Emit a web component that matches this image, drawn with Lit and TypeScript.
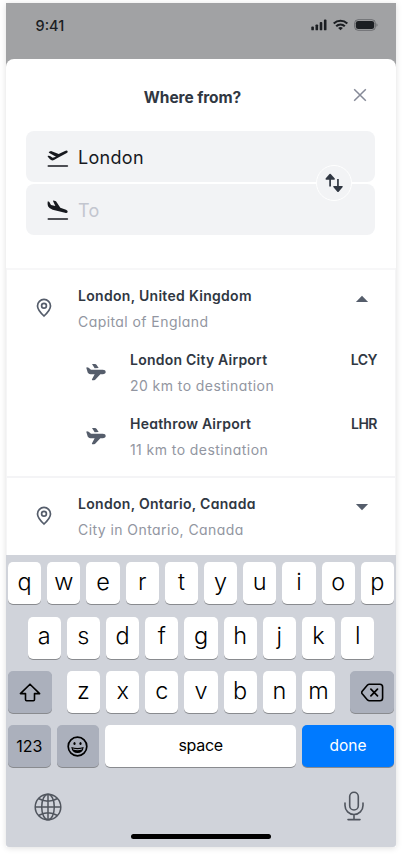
import { LitElement, html, css, svg } from "lit";
import { customElement, property } from "lit/decorators.js";

const icons: Record<string, unknown> = {
  signal: svg`<svg width="17" height="12" viewBox="0 0 17 12"><g fill="currentColor"><rect x="0.3" y="7.6" width="2.6" height="3.7" rx=".9"/><rect x="4.5" y="5.4" width="2.6" height="5.9" rx=".9"/><rect x="8.7" y="3" width="2.6" height="8.3" rx=".9"/><rect x="12.9" y="0.6" width="2.6" height="10.7" rx=".9"/></g></svg>`,
  wifi: svg`<svg width="16" height="12" viewBox="0 0 16 12"><g fill="none" stroke="currentColor" stroke-width="2.1"><path d="M.7 4.500a9.800 9.800 0 0 1 13.600 0"/><path d="M3.200 7.300a6 6 0 0 1 8.600 0"/></g><path d="M7.500 11.300 5.100 9.100a3.400 3.400 0 0 1 4.800 0z" fill="currentColor"/></svg>`,
  battery: svg`<svg width="24" height="12" viewBox="0 0 24 12"><rect x=".6" y=".7" width="20.8" height="10.6" rx="3.6" fill="none" stroke="currentColor" stroke-opacity=".4"/><rect x="1.8" y="1.9" width="18.4" height="8.2" rx="2.4" fill="currentColor"/><path d="M22.5 4.3c1.3.6 1.3 2.8 0 3.4z" fill="currentColor" fill-opacity=".45"/></svg>`,
  close: svg`<svg width="14" height="14" viewBox="0 0 14 14"><path d="m1.2 1.2 11.6 11.6m0-11.6L1.2 12.8" stroke="currentColor" stroke-width="1.5" fill="none"/></svg>`,
  takeoff: svg`<svg width="22" height="18" viewBox="0 0 66 54"><path d="M4 20 9 21 17 26 27 23 7 12Q3 8 7 8L12 6 35 15 54 6Q60 3 62 6.500 63 10 58 13L30 28 21 33Q14 36 9 31L3 24Q0 20 4 20Z" fill="currentColor"/><path d="M4 51h57" stroke="currentColor" stroke-width="5" stroke-linecap="round"/></svg>`,
  landing: svg`<svg width="22" height="22" viewBox="0 0 66 66"><path d="M3 7 7 9 12 18 25 21 18 6Q18 3 22 5L27 7 40 26 57 32Q63 34 62 39 60 43 54 41L17 32Q5 28 3 22Q1 15 2 8Z" fill="currentColor"/><path d="M4 60h57" stroke="currentColor" stroke-width="5" stroke-linecap="round"/></svg>`,
  swap: svg`<svg width="20" height="20" viewBox="0 0 20 20"><g fill="currentColor"><path d="M5.500 1Q6.100.4 6.700 1L10.800 5.500Q11.200 6.500 10.300 6.700H2.100Q1.100 6.500 1.600 5.500Z"/><path d="M5.250 6h1.700v7.600H5.250zM13.100 6h1.700v8h-1.700z"/><path d="M9.900 13h8.200q1 .2.600 1.100l-4 4.700q-.7.6-1.400 0l-4-4.700q-.4-.9.600-1.100Z"/></g></svg>`,
  pin: svg`<svg width="16" height="20" viewBox="0 0 16 20"><g fill="none" stroke="currentColor" stroke-width="1.700"><path d="M8 18C5.400 15.500 1.500 11.400 1.500 7.900a6.500 6.500 0 0 1 13 0C14.500 11.400 10.600 15.500 8 18Z"/><circle cx="8" cy="7.800" r="2.400"/></g></svg>`,
  plane: svg`<svg width="20" height="18" viewBox="0 0 60 54"><g fill="currentColor"><path d="M3 13 8 14 15 20H50Q59 20 59 27 59 33 50 34H43L29 49Q27 52 24 52H19Q17 52 18 49L26 34H14Q5 33 4 25L1 15Q1 13 3 13Z"/><path d="M18 3H27Q30 3 32 6L38 15 26 16Z"/></g></svg>`,
  up: svg`<svg width="14" height="8" viewBox="0 0 14 8"><path d="M7 .7 13.100 7H.900Z" fill="currentColor"/></svg>`,
  down: svg`<svg width="14" height="8" viewBox="0 0 14 8"><path d="M7 7.300.900 1H13.100Z" fill="currentColor"/></svg>`,
  shift: svg`<svg width="22" height="19" viewBox="0 0 22 19"><path d="M11 1.200 20.600 10.600H15.500V16.600Q15.500 17.700 14.400 17.700H7.600Q6.500 17.700 6.500 16.600V10.600H1.400Z" fill="none" stroke="currentColor" stroke-width="1.600" stroke-linejoin="round"/></svg>`,
  erase: svg`<svg width="23" height="19" viewBox="0 0 23 19"><g fill="none" stroke="currentColor" stroke-width="1.600" stroke-linecap="round" stroke-linejoin="round"><path d="M8.300 1.200H18.900Q21.600 1.200 21.600 3.900V15Q21.600 17.700 18.900 17.700H8.300Q7.300 17.700 6.500 16.900L1.200 10.800Q.200 9.500 1.200 8.200L6.500 2Q7.300 1.200 8.300 1.200Z"/><path d="m9.900 6.100 6.600 6.700m0-6.700-6.600 6.700" stroke-width="1.700"/></g></svg>`,
  smile: svg`<svg width="21" height="21" viewBox="0 0 21 21"><circle cx="10.500" cy="10.500" r="9.300" fill="none" stroke="currentColor" stroke-width="1.700"/><ellipse cx="7.500" cy="7.600" rx="1.100" ry="1.500" fill="currentColor"/><ellipse cx="13.500" cy="7.600" rx="1.100" ry="1.500" fill="currentColor"/><path d="M4.300 11Q10.500 13 16.700 11 16 17 10.500 17T4.300 11Z" fill="currentColor"/><path d="M5.700 12.400Q10.500 13.900 15.300 12.400L14.800 13.500Q10.500 15 6.200 13.500Z" fill="#abb0bc"/></svg>`,
  globe: svg`<svg width="28" height="28" viewBox="0 0 28 28"><g fill="none" stroke="currentColor" stroke-width="1.500"><circle cx="14" cy="14" r="12.800"/><ellipse cx="14" cy="14" rx="6.300" ry="12.800"/><path d="M14 1v26M1 14h26M4.500 5.500Q14 11 23.500 5.500M4.500 22.500Q14 17 23.500 22.500"/></g></svg>`,
  mic: svg`<svg width="20" height="30" viewBox="0 0 20 30"><g fill="none" stroke="currentColor" stroke-width="1.600" stroke-linecap="round"><rect x="5.700" y="1.200" width="8.600" height="17.800" rx="4.300"/><path d="M1 12v2.500a9 9 0 0 0 18 0V12M10 23.500v5M4 28.600h12"/></g></svg>`,
};

@customElement("ui-icon")
class UiIcon extends LitElement {
  @property() name = "";
  static styles = css`
    :host { display: inline-flex; flex: none; }
    svg { display: block; }
  `;
  render() { return icons[this.name]; }
}

@customElement("place-row")
class PlaceRow extends LitElement {
  @property() heading = "";
  @property() detail = "";
  @property() code = "";
  @property() arrow = "";
  @property({ type: Boolean, reflect: true }) nested = false;
  static styles = css`
    :host { display: flex; height: 64px; box-sizing: border-box; padding: 0 18px 0 29px; }
    :host([nested]) { padding-left: 79px; }
    .mark { width: 42px; padding-top: 15px; color: #555d6b; box-sizing: border-box; }
    :host([nested]) .mark { width: 44px; padding-top: 16px; }
    .text { flex: 1; white-space: nowrap; }
    .heading, .code { font-size: 14px; font-weight: 600; line-height: 26px; color: #303742; letter-spacing: .3px; }
    :host([nested]) .heading { letter-spacing: .23px; }
    .code { letter-spacing: -.5px; }
    .detail { font-size: 14px; line-height: 26px; color: #9296a1; letter-spacing: .43px; }
    .arrow { padding: 4px 8px 0 0; color: #555d6b; }
  `;
  render() {
    return html`
      <div class="mark"><ui-icon name=${this.nested ? "plane" : "pin"}></ui-icon></div>
      <div class="text"><div class="heading">${this.heading}</div><div class="detail">${this.detail}</div></div>
      ${this.code ? html`<div class="code">${this.code}</div>` : ""}
      ${this.arrow ? html`<div class="arrow"><ui-icon name=${this.arrow}></ui-icon></div>` : ""}
    `;
  }
}

@customElement("key-board")
class KeyBoard extends LitElement {
  static styles = css`
    :host { display: flex; flex-direction: column; gap: 12px; height: 292.500px; box-sizing: border-box; padding: 7.700px 2px 0; background: #d0d3da; color: #0b0b0c; font-family: Inter, sans-serif; font-feature-settings: normal; border-radius: 0 0 3px 3px; }
    .row { display: flex; justify-content: center; gap: 6.100px; height: 42.300px; }
    .key { display: flex; align-items: center; justify-content: center; width: 33.100px; height: 42px; border-radius: 5px; background: #fff; box-shadow: 0 1px 0 #898b8f; font-size: 23.500px; font-weight: 350; color: #000; box-sizing: border-box; padding-bottom: 4px; }
    .dark { background: #abb0bc; padding: 0; }
    .side { width: 44px; }
    .third { justify-content: space-between; }
    .letters { display: flex; gap: 6.100px; }
    .small { width: 42.600px; font-size: 16px; font-weight: 400; }
    .space { flex: 1; font-size: 16px; font-weight: 400; letter-spacing: -.3px; padding-bottom: 2px; }
    .done { width: 92px; background: #007aff; color: #fff; font-size: 15.500px; font-weight: 400; padding-bottom: 2px; }
    .tools { display: flex; justify-content: space-between; padding: 11px 30px 0 25.500px; color: #50555e; }
    .tools ui-icon:first-child { padding-top: 2px; }
    .home { width: 140px; height: 5px; border-radius: 3px; background: #000; margin: 1px auto 0; }
  `;
  keys(s: string) { return [...s].map((k) => html`<div class="key">${k}</div>`); }
  render() {
    return html`
      <div class="row">${this.keys("qwertyuiop")}</div>
      <div class="row">${this.keys("asdfghjkl")}</div>
      <div class="row third">
        <div class="key dark side"><ui-icon name="shift"></ui-icon></div>
        <div class="letters">${this.keys("zxcvbnm")}</div>
        <div class="key dark side"><ui-icon name="erase"></ui-icon></div>
      </div>
      <div class="row">
        <div class="key dark small">123</div>
        <div class="key dark small"><ui-icon name="smile"></ui-icon></div>
        <div class="key space">space</div>
        <div class="key done">done</div>
      </div>
      <div class="tools"><ui-icon name="globe"></ui-icon><ui-icon name="mic"></ui-icon></div>
      <div class="home"></div>
    `;
  }
}

@customElement("app-root")
class AppRoot extends LitElement {
  static styles = css`
    :host { display: block; height: 857px; box-sizing: border-box; padding: 3.300px 6px 0; background: #fff; font-family: Inter, sans-serif; font-feature-settings: "cv11"; overflow: hidden; }
    .phone { height: 844px; display: flex; flex-direction: column; background: #a1a2a4; box-shadow: 0 1px 6px rgba(0, 0, 0, .13); border-radius: 0 0 3px 3px; }
    .status { height: 56px; display: flex; align-items: flex-start; justify-content: space-between; padding: 13px 18px 0 29.500px; box-sizing: border-box; color: #1b1e22; }
    .time { font-size: 14.500px; line-height: 20px; font-weight: 500; font-feature-settings: normal; }
    .indicators { display: flex; gap: 5px; padding-top: 3px; }
    .sheet { flex: 1; display: flex; flex-direction: column; background: #fff; border-radius: 8px 8px 0 0; }
    .header { display: grid; grid-template-columns: 1fr auto 1fr; align-items: center; height: 72.400px; padding: 0 29px 0 12px; }
    .title { grid-column: 2; font-size: 15.500px; font-weight: 700; color: #303742; padding-top: 4px; letter-spacing: -.08px; }
    .close { justify-self: end; color: #858997; }
    .form { position: relative; display: flex; flex-direction: column; gap: 2px; padding: 0 21px 0 20px; height: 136.500px; box-sizing: border-box; }
    .field { display: flex; align-items: center; height: 51px; border-radius: 8px; background: #f2f3f5; padding: 0 21px; color: #17191e; font-size: 18px; letter-spacing: .3px; }
    .field ui-icon { width: 31px; padding-top: 3px; }
    .field.to ui-icon { padding-top: 0; }
    .value { padding-top: 1px; }
    .to .value { color: #c3c6cf; }
    .swap { position: absolute; left: 310px; top: 34px; width: 34px; height: 34px; border: 1px solid #fff; border-radius: 50%; background: #f2f3f5; display: flex; align-items: center; justify-content: center; color: #303742; }
    .list { flex: 1; margin: 0 1px; border-top: 2px solid #f7f7f8; box-shadow: -1px 0 #f5f5f6, 1px 0 #f5f5f6; }
    .group { padding-top: 13px; }
    .group + .group { border-top: 2px solid #f4f4f6; }
    .group:first-child { height: 206px; box-sizing: border-box; }
  `;
  render() {
    return html`
      <div class="phone">
        <div class="status"><div class="time">9:41</div>
          <div class="indicators"><ui-icon name="signal"></ui-icon><ui-icon name="wifi"></ui-icon><ui-icon name="battery"></ui-icon></div>
        </div>
        <div class="sheet">
          <div class="header"><div class="title">Where from?</div><ui-icon class="close" name="close"></ui-icon></div>
          <div class="form">
            <div class="field"><ui-icon name="takeoff"></ui-icon><span class="value">London</span></div>
            <div class="field to"><ui-icon name="landing"></ui-icon><span class="value">To</span></div>
            <div class="swap"><ui-icon name="swap"></ui-icon></div>
          </div>
          <div class="list">
            <div class="group">
              <place-row heading="London, United Kingdom" detail="Capital of England" arrow="up"></place-row>
              <place-row nested heading="London City Airport" detail="20 km to destination" code="LCY"></place-row>
              <place-row nested heading="Heathrow Airport" detail="11 km to destination" code="LHR"></place-row>
            </div>
            <div class="group">
              <place-row heading="London, Ontario, Canada" detail="City in Ontario, Canada" arrow="down"></place-row>
            </div>
          </div>
          <key-board></key-board>
        </div>
      </div>
    `;
  }
}
